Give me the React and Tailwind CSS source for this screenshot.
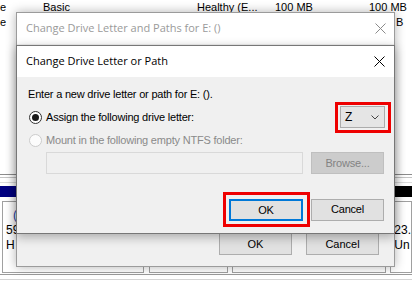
const ui = "font-['Liberation_Sans',Arial,sans-serif]";
const title = "font-['Open_Sans','Noto_Sans',sans-serif]";

function CloseX({ className }) {
  return (
    <svg width="11" height="11" viewBox="0 0 11 11" className={className}>
      <path d="M0.5 0.5L10.5 10.5M10.5 0.5L0.5 10.5" stroke="currentColor" strokeWidth="1" fill="none" />
    </svg>
  );
}

function Radio({ checked, disabled }) {
  return (
    <span
      className={`flex h-[13px] w-[13px] shrink-0 items-center justify-center rounded-full border ${
        disabled ? "border-[#cccccc] bg-[#fcfcfc]" : "border-[#333333] bg-white"
      }`}
    >
      {checked && <span className="h-[7px] w-[7px] rounded-full bg-[#1a1a1a]" />}
    </span>
  );
}

function Button({ children, className = "" }) {
  return (
    <div className={`flex h-[22px] w-[73px] items-center justify-center border border-[#adadad] bg-[#e1e1e1] text-[11px] text-black ${className}`}>
      {children}
    </div>
  );
}

function Background() {
  return (
    <div className={`flex h-full flex-col text-[11px] text-black ${ui}`}>
      <div className="flex h-[14px] items-center pt-[1px]">
        <span className="w-[43px]">e</span>
        <span className="w-[154px]">Basic</span>
        <span className="w-[78px]">Healthy (E...</span>
        <span className="w-[94px]">100 MB</span>
        <span>100 MB</span>
      </div>
      <div className="flex h-[16px] items-center">
        <span className="w-[396px]">e</span>
        <span>B</span>
      </div>
      <div className="h-[144px]" />
      <div className="h-[1px] bg-[#8c8c8c]" />
      <div className="mt-[2px] h-[1px] bg-[#c4c4c4]" />
      <div className="mt-[4px] h-[1px] bg-[#dcdcdc]" />
      <div className="mt-[3px] flex h-[11px]">
        <div className="w-[200px] bg-[#000080]" />
        <div className="flex-1 bg-black" />
      </div>
      <div className="flex h-[76px] pt-[4px]">
        <div className="ml-[2px] flex w-[143px] flex-col border border-[#a0a0a0] pl-[3px] pt-[6px] text-[12px] leading-[15px]">
          <span className="pl-[7px] text-[#1c3fb0]">(</span>
          <span>59</span>
          <span>H</span>
        </div>
        <div className="ml-[5px] w-[79px] border border-[#a0a0a0]" />
        <div className="ml-[4px] w-[155px] border border-[#a0a0a0]" />
        <div className="ml-[4px] flex flex-1 flex-col border border-[#a0a0a0] pl-[3px] pt-[21px] text-[12px] leading-[15px]">
          <span>23.</span>
          <span>Un</span>
        </div>
      </div>
      <div className="mt-[1px] h-[1px] bg-[#9a9a9a]" />
      <div className="mt-[4px] h-[1px] bg-[#d4d4d4]" />
    </div>
  );
}

export default function App() {
  return (
    <div className="relative h-[284px] w-[412px] overflow-hidden bg-white">
      <Background />

      {/* outer dialog */}
      <div className="absolute left-[16px] top-[12px] flex h-[255px] w-[379px] flex-col border border-[#9b9b9b] bg-[#f0f0f0] shadow-[0_0_10px_rgba(0,0,0,0.3)]">
        <div className="flex h-[31px] items-center justify-between bg-white pl-[9px] pr-[8px]">
          <span className={`text-[11px] text-[#9a9a9a] ${title}`}>Change Drive Letter and Paths for E: ()</span>
          <CloseX className="text-[#8a8a8a]" />
        </div>
        <div className={`flex flex-1 items-end justify-end gap-[14px] pb-[11px] pr-[15px] ${ui}`}>
          <Button>OK</Button>
          <Button>Cancel</Button>
        </div>
      </div>

      {/* inner dialog */}
      <div className="absolute left-[16px] top-[45px] flex h-[189px] w-[379px] flex-col border border-[#777777] bg-[#f0f0f0] shadow-[0_3px_10px_rgba(0,0,0,0.3)]">
        <div className="flex h-[31px] shrink-0 items-center justify-between bg-white pl-[9px] pr-[9px]">
          <span className={`text-[11px] text-black ${title}`}>Change Drive Letter or Path</span>
          <CloseX className="text-black" />
        </div>
        <div className={`flex flex-col text-[11px] tracking-[-0.2px] text-black ${ui}`}>
          <div className="flex h-[14px] items-center pl-[11px] mt-[10px]">
            Enter a new drive letter or path for E: ().
          </div>
          <div className="mt-[1px] flex h-[31px] items-center justify-between pl-[12px] pr-[3px]">
            <div className="flex items-center gap-[4px]">
              <Radio checked />
              <span>Assign the following drive letter:</span>
            </div>
            <div className="flex h-[31px] w-[56px] border-[3px] border-[#ee0000] pl-[2px] pt-[1px]">
              <div className="flex h-[22px] w-[45px] items-center justify-between border border-[#acacac] bg-[#e5e5e5] pl-[4px] pr-[5px] text-[12px]">
                <span>Z</span>
                <svg width="8" height="5" viewBox="0 0 8 5">
                  <path d="M0.5 0.5L4 4L7.5 0.5" stroke="#444" strokeWidth="1" fill="none" />
                </svg>
              </div>
            </div>
          </div>
          <div className="flex h-[14px] items-center gap-[4px] pl-[12px] text-[#8a8a8a]">
            <Radio disabled />
            <span>Mount in the following empty NTFS folder:</span>
          </div>
          <div className="mt-[5px] flex h-[22px] pl-[29px]">
            <div className="w-[257px] border border-[#d9d9d9] bg-[#f0f0f0]" />
            <div className="ml-[8px] flex w-[73px] items-center justify-center border border-[#bfbfbf] bg-[#cccccc] text-[#838383]">
              Browse...
            </div>
          </div>
          <div className="mt-[18px] flex items-center justify-end pr-[10px]">
            <div className="flex h-[35px] w-[87px] border-[3px] border-[#ee0000] pl-[3px] pt-[4px]">
              <div className="flex h-[22px] w-[74px] items-center justify-center border-2 border-[#0078d7] bg-[#e1e1e1]">
                OK
              </div>
            </div>
            <Button className="ml-[1px]">Cancel</Button>
          </div>
        </div>
      </div>
    </div>
  );
}
